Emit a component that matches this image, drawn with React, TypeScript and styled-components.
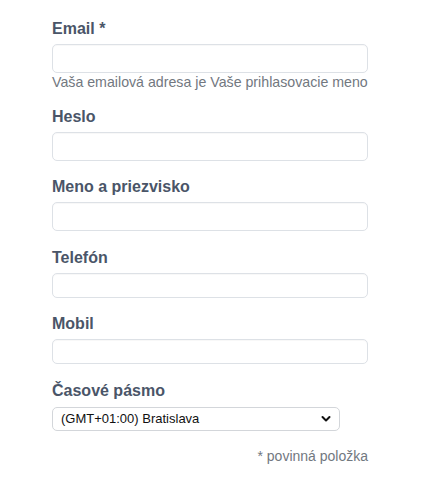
import React from "react";
import styled, { createGlobalStyle } from "styled-components";

const GlobalStyle = createGlobalStyle`
  body {
    margin: 0;
    background: #fff;
    font-family: "Liberation Sans", Arial, sans-serif;
  }
`;

const Form = styled.form`
  width: 316px;
  padding: 19px 0 0 52px;
  display: flex;
  flex-direction: column;
`;

const Field = styled.div<{ $last?: boolean }>`
  display: flex;
  flex-direction: column;
  margin-bottom: ${(p) => (p.$last ? 0 : 16.6)}px;
`;

const Label = styled.label`
  font-size: 16px;
  line-height: 20px;
  font-weight: 700;
  color: #4a5568;
  margin-bottom: 5px;
`;

const Input = styled.input<{ $h: number }>`
  box-sizing: border-box;
  width: 100%;
  height: ${(p) => p.$h}px;
  border: 1px solid #dde1e6;
  border-radius: 5px;
  background: #fff;
  box-shadow: inset 0 1px 1px rgba(0, 0, 0, 0.03);
  outline: none;
  padding: 0 8px;
  font-size: 14px;
`;

const Help = styled.div`
  margin-top: 2px;
  font-size: 14.2px;
  line-height: 15px;
  color: #72787f;
  white-space: nowrap;
`;

const SelectWrap = styled.div`
  position: relative;
  width: 288px;
  margin-top: 1px;
`;

const Select = styled.select`
  appearance: none;
  box-sizing: border-box;
  width: 100%;
  height: 24px;
  border: 1px solid #d3d6da;
  border-radius: 5px;
  background: #fff;
  padding: 0 24px 0 8px;
  font-family: "Liberation Sans", Arial, sans-serif;
  font-size: 13px;
  color: #111;
  outline: none;
`;

const Chevron = styled.svg`
  position: absolute;
  right: 9px;
  top: 8px;
  pointer-events: none;
`;

const Note = styled.div`
  align-self: flex-end;
  font-size: 14px;
  line-height: 18px;
  color: #72787f;
  margin-top: 16px;
`;

const fields = [
  { id: "email", label: "Email *", h: 29, help: "Vaša emailová adresa je Vaše prihlasovacie meno" },
  { id: "heslo", label: "Heslo", h: 29 },
  { id: "meno", label: "Meno a priezvisko", h: 29 },
  { id: "telefon", label: "Telefón", h: 25 },
  { id: "mobil", label: "Mobil", h: 25 },
];

export default function App() {
  return (
    <>
      <GlobalStyle />
      <Form>
        {fields.map((f) => (
          <Field key={f.id}>
            <Label htmlFor={f.id}>{f.label}</Label>
            <Input id={f.id} $h={f.h} type={f.id === "heslo" ? "password" : "text"} />
            {f.help && <Help>{f.help}</Help>}
          </Field>
        ))}
        <Field $last>
          <Label htmlFor="tz">Časové pásmo</Label>
          <SelectWrap>
            <Select id="tz" defaultValue="bratislava">
              <option value="bratislava">(GMT+01:00) Bratislava</option>
            </Select>
            <Chevron width="10" height="8" viewBox="0 0 10 8">
              <path d="M1.5 2 L5 5.5 L8.5 2" fill="none" stroke="#111" strokeWidth="2" strokeLinecap="round" strokeLinejoin="round" />
            </Chevron>
          </SelectWrap>
        </Field>
        <Note>* povinná položka</Note>
      </Form>
    </>
  );
}
